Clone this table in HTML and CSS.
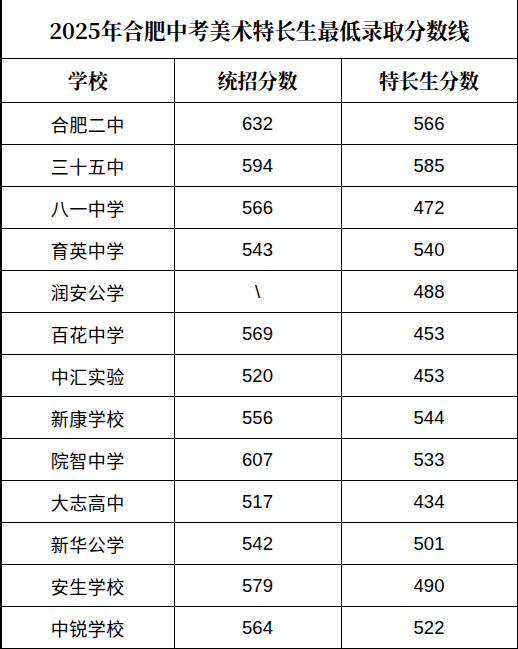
FILE: index.html
```html
<!DOCTYPE html>
<html lang="zh-CN">
<head>
<meta charset="utf-8">
<title>2025年合肥中考美术特长生最低录取分数线</title>
<link rel="stylesheet" href="styles.css">
</head>
<body>
<table class="score-table">
  <colgroup>
    <col class="c1"><col class="c2"><col class="c3">
  </colgroup>
  <tr class="title-row"><th colspan="3">2025年合肥中考美术特长生最低录取分数线</th></tr>
  <tr class="head-row"><th>学校</th><th>统招分数</th><th>特长生分数</th></tr>
  <tr><td class="name">合肥二中</td><td class="num">632</td><td class="num">566</td></tr>
  <tr><td class="name">三十五中</td><td class="num">594</td><td class="num">585</td></tr>
  <tr><td class="name">八一中学</td><td class="num">566</td><td class="num">472</td></tr>
  <tr><td class="name">育英中学</td><td class="num">543</td><td class="num">540</td></tr>
  <tr><td class="name">润安公学</td><td class="num slash">\</td><td class="num">488</td></tr>
  <tr><td class="name">百花中学</td><td class="num">569</td><td class="num">453</td></tr>
  <tr><td class="name">中汇实验</td><td class="num">520</td><td class="num">453</td></tr>
  <tr><td class="name">新康学校</td><td class="num">556</td><td class="num">544</td></tr>
  <tr><td class="name">院智中学</td><td class="num">607</td><td class="num">533</td></tr>
  <tr><td class="name">大志高中</td><td class="num">517</td><td class="num">434</td></tr>
  <tr><td class="name">新华公学</td><td class="num">542</td><td class="num">501</td></tr>
  <tr><td class="name">安生学校</td><td class="num">579</td><td class="num">490</td></tr>
  <tr><td class="name">中锐学校</td><td class="num">564</td><td class="num">522</td></tr>
</table>
</body>
</html>
```
FILE: styles.css
```css
html, body {
  margin: 0;
  padding: 0;
  background: #fff;
}
.score-table {
  border-collapse: collapse;
  table-layout: fixed;
  width: 517px;
  margin: 0;
  border-left: 2px solid #000;
}
.c1 { width: 173px; }
.c2 { width: 167px; }
.c3 { width: 176px; }
.score-table th,
.score-table td {
  box-sizing: border-box;
  border: 1px solid #000;
  padding: 0;
  line-height: 1.2;
  text-align: center;
  vertical-align: middle;
  color: #000;
}
.title-row th {
  border-top: none;
  border-left: 2px solid #000;
  height: 58px;
  font-family: "Noto Serif CJK SC", "Noto Sans CJK SC", serif;
  font-weight: 700;
  font-size: 21.7px;
  padding-top: 3px;
}
.head-row th {
  height: 44px;
  font-family: "Noto Serif CJK SC", "Noto Sans CJK SC", serif;
  font-weight: 700;
  font-size: 20px;
  padding-top: 2px;
}
.score-table th:first-child,
.score-table td:first-child {
  border-left: 2px solid #000;
}
.score-table td {
  height: 42px;
  padding-top: 3px;
}
.name {
  font-family: "Noto Sans CJK SC", sans-serif;
  font-size: 18px;
  color: #1a1a1a;
  letter-spacing: 0.5px;
}
.num {
  font-family: "Liberation Sans", Arial, sans-serif;
  font-size: 18.5px;
}
.slash {
  color: #333;
}
```
